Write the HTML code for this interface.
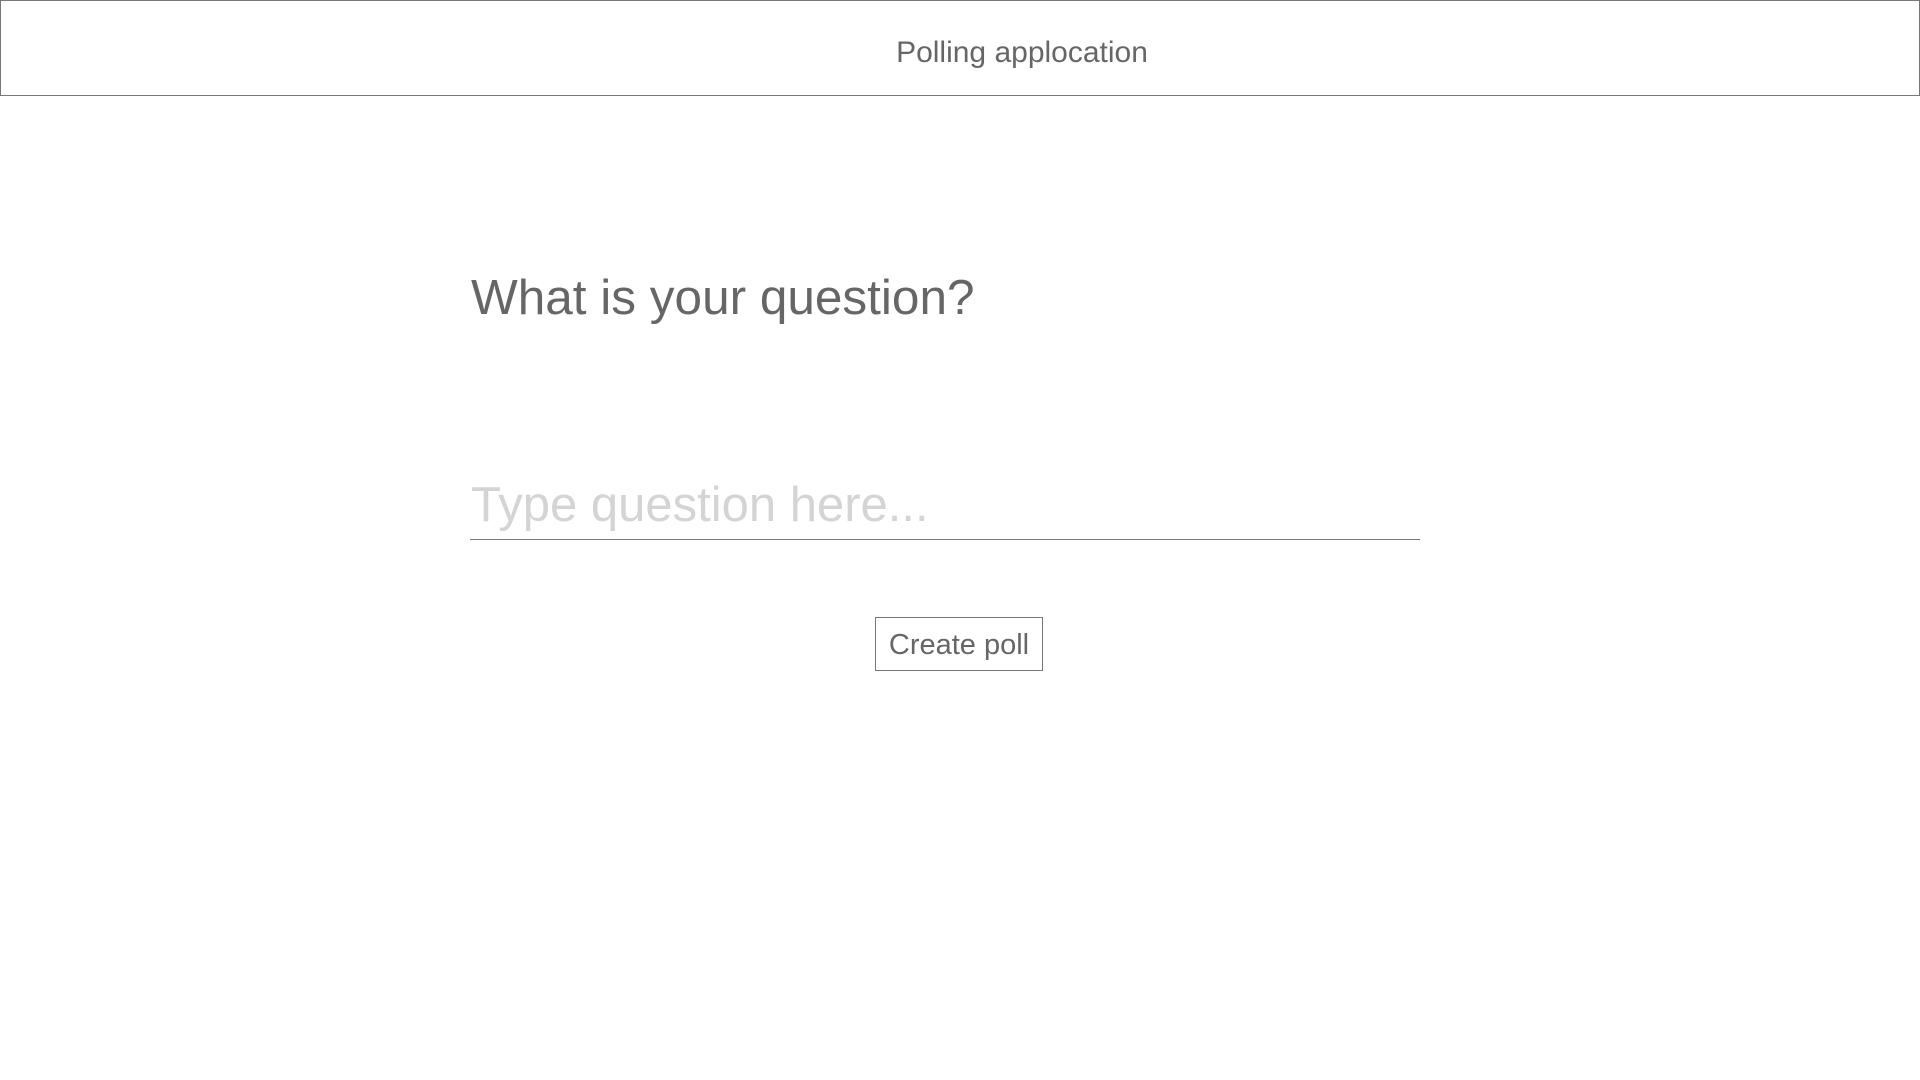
<!DOCTYPE html>
<html><head><style>
body{margin:0;width:1920px;height:1080px;background:#fff;font-family:"Liberation Sans","DejaVu Sans",sans-serif;color:#666;position:relative;overflow:hidden}
.hdr{position:absolute;left:0;top:0;width:1918px;height:94px;border:1px solid #777;}
.hdr span{position:absolute;left:0;width:100%;text-align:center;top:35px;font-size:30px;line-height:34px;padding-left:124px;box-sizing:border-box}
h1{position:absolute;left:471px;top:268px;margin:0;font-weight:normal;font-size:49.5px;line-height:60px;color:#666}
.inp{position:absolute;left:470px;top:470px;width:950px;height:69px;border-bottom:1.5px solid #777}
.inp span{position:absolute;left:1px;top:5px;font-size:49px;line-height:60px;color:#d4d4d4}
.btn{position:absolute;left:875px;top:617px;width:166px;height:52px;border:1px solid #777;font-size:29px;line-height:54px;text-align:center}
</style></head><body>
<div class="hdr"><span>Polling applocation</span></div>
<h1>What is your question?</h1>
<div class="inp"><span>Type question here...</span></div>
<div class="btn">Create poll</div>
</body></html>
